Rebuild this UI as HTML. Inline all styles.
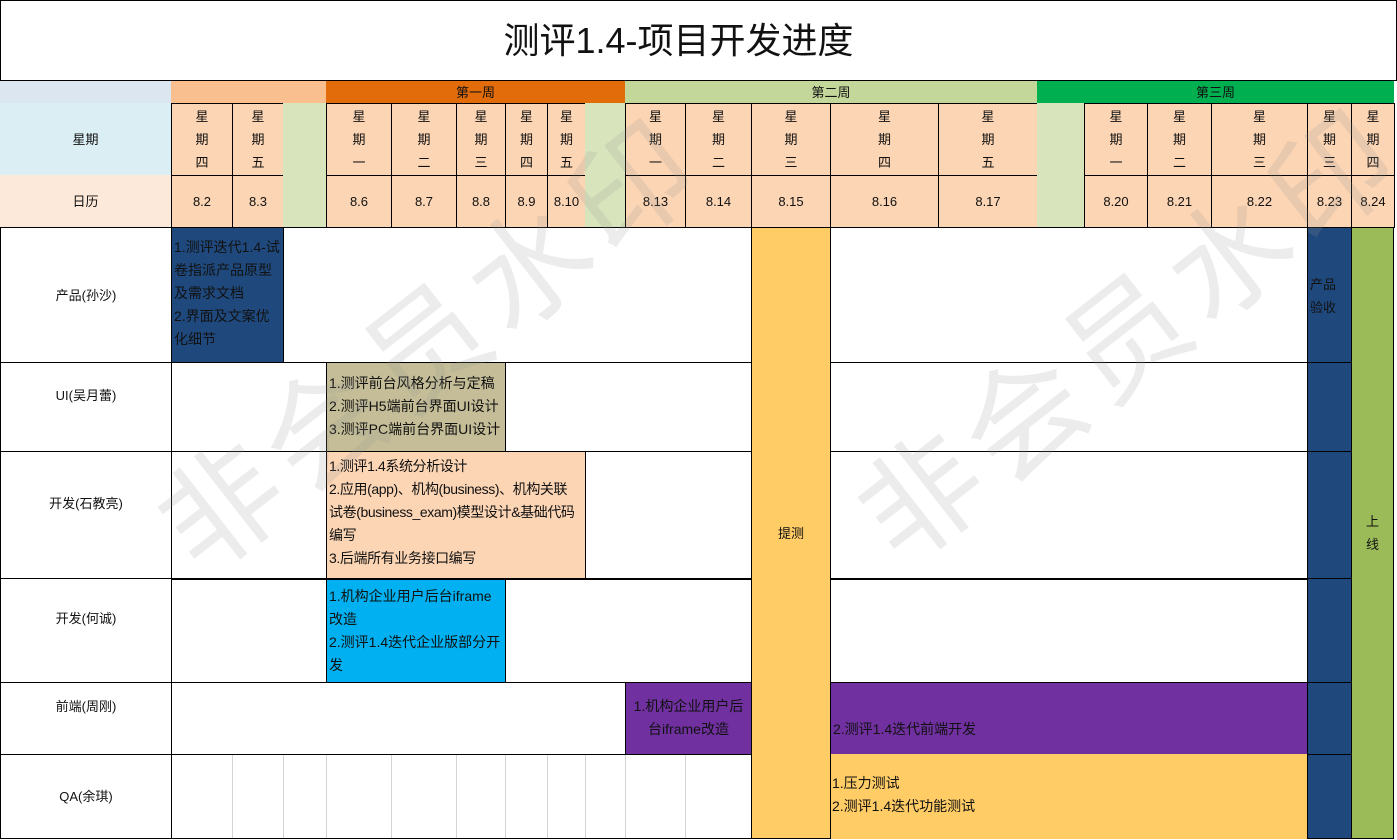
<!DOCTYPE html>
<html><head><meta charset="utf-8"><style>
body{margin:0;width:1397px;height:840px;overflow:hidden;background:#fff;font-family:"Liberation Sans","Noto Sans CJK SC",sans-serif;font-size:13px;color:#111;position:relative}
.c{position:absolute;box-sizing:border-box;border:1px solid #000;display:flex;align-items:center;justify-content:center;text-align:center;line-height:23px}
.n{border:none}
.t{position:absolute;box-sizing:border-box;padding:2px 2px;line-height:23px;text-align:left;border:1px solid #000;font-size:14px}
.g{position:absolute;top:754px;height:84px;border-left:1px solid #d4d4d4}
.wm{position:absolute;font-size:120px;color:rgba(150,150,150,0.18);transform:rotate(-38deg);white-space:nowrap;letter-spacing:10px;pointer-events:none}
</style></head><body>
<div class="c" style="left:0;top:0;width:1397px;height:81px;font-size:36px;padding-right:40px">测评1.4-项目开发进度</div>

<div class="c n" style="left:0;top:81px;width:171px;height:22px;background:#dce6f1"></div>
<div class="c n" style="left:171px;top:81px;width:155px;height:22px;background:#fabf8f"></div>
<div class="c n" style="left:326px;top:81px;width:299px;height:22px;background:#e26b0a">第一周</div>
<div class="c n" style="left:625px;top:81px;width:412px;height:22px;background:#c4d79b">第二周</div>
<div class="c n" style="left:1037px;top:81px;width:357px;height:22px;background:#00b050">第三周</div>

<div class="c n" style="left:0;top:103px;width:171px;height:73px;background:#daeef3">星期</div>
<div class="c n" style="left:0;top:175px;width:171px;height:52px;background:#fde9d9">日历</div>

<div id="cols"></div>
<script>
var cols=[[171,232,"四","8.2"],[232,283,"五","8.3"],[283,326,"",""],[326,391,"一","8.6"],[391,456,"二","8.7"],[456,505,"三","8.8"],[505,547,"四","8.9"],[547,585,"五","8.10"],[585,625,"",""],[625,685,"一","8.13"],[685,751,"二","8.14"],[751,830,"三","8.15"],[830,938,"四","8.16"],[938,1037,"五","8.17"],[1037,1084,"",""],[1084,1147,"一","8.20"],[1147,1211,"二","8.21"],[1211,1307,"三","8.22"],[1307,1351,"三","8.23"],[1351,1394,"四","8.24"]];
var h="";
cols.forEach(function(c){var w=c[1]-c[0]+1;var green=c[2]=="";var bg=green?"#d8e4bc":"#fcd5b4";
h+='<div class="c" style="left:'+c[0]+'px;top:103px;width:'+w+'px;height:73px;background:'+bg+(green?';border:none':'')+'">'+(green?'':'星<br>期<br>'+c[2])+'</div>';
h+='<div class="c" style="left:'+c[0]+'px;top:175px;width:'+w+'px;height:53px;background:'+bg+(green?';border:none':'')+'">'+c[3]+'</div>';
if(c[0]<751&&c[0]>171)h+='<div class="g" style="left:'+c[0]+'px"></div>';});
document.getElementById("cols").innerHTML=h;
</script>

<div class="c" style="left:0;top:227px;width:172px;height:136px">产品(孙沙)</div>
<div class="c" style="left:0;top:362px;width:172px;height:90px;padding-bottom:24px">UI(吴月蕾)</div>
<div class="c" style="left:0;top:451px;width:172px;height:128px;padding-bottom:24px">开发(石教亮)</div>
<div class="c" style="left:0;top:578px;width:172px;height:105px;padding-bottom:24px">开发(何诚)</div>
<div class="c" style="left:0;top:682px;width:172px;height:73px;padding-bottom:24px">前端(周刚)</div>
<div class="c" style="left:0;top:754px;width:172px;height:85px">QA(余琪)</div>

<div class="c" style="left:171px;top:227px;width:581px;height:136px"></div>
<div class="c" style="left:171px;top:362px;width:581px;height:90px"></div>
<div class="c" style="left:171px;top:451px;width:581px;height:128px"></div>
<div class="c" style="left:171px;top:578px;width:581px;height:105px;border-top:2px solid #000"></div>
<div class="c" style="left:171px;top:682px;width:581px;height:73px"></div>
<div class="c" style="left:830px;top:227px;width:478px;height:136px"></div>
<div class="c" style="left:830px;top:362px;width:478px;height:90px"></div>
<div class="c" style="left:830px;top:451px;width:478px;height:128px"></div>
<div class="c" style="left:830px;top:578px;width:478px;height:105px;border-top:2px solid #000"></div>
<div class="c" style="left:171px;top:754px;width:581px;height:85px;border-left:none;border-top:none"></div>

<div class="t" style="left:171px;top:227px;width:113px;height:136px;background:#1f497d;padding-top:8px">1.测评迭代1.4-试卷指派产品原型及需求文档<br>2.界面及文案优化细节</div>
<div class="t" style="left:326px;top:362px;width:180px;height:90px;background:#c4bd97;padding-top:9px">1.测评前台风格分析与定稿<br>2.测评H5端前台界面UI设计<br>3.测评PC端前台界面UI设计</div>
<div class="t" style="left:326px;top:451px;width:260px;height:128px;background:#fcd5b4;padding-top:3px;white-space:nowrap;letter-spacing:-0.4px;overflow:hidden">1.测评1.4系统分析设计<br>2.应用(app)、机构(business)、机构关联<br>试卷(business_exam)模型设计&amp;基础代码<br>编写<br>3.后端所有业务接口编写</div>
<div class="t" style="left:326px;top:578px;width:180px;height:105px;background:#00b0f0;padding-top:5px;border-top:2px solid #000">1.机构企业用户后台iframe改造<br>2.测评1.4迭代企业版部分开发</div>
<div class="t" style="left:625px;top:682px;width:127px;height:73px;background:#7030a0;padding-top:12px;text-align:center">1.机构企业用户后台iframe改造</div>
<div class="t" style="left:830px;top:682px;width:478px;height:73px;background:#7030a0;padding-top:35px">2.测评1.4迭代前端开发</div>
<div class="t" style="left:830px;top:754px;width:478px;height:85px;background:#ffcc66;padding-top:18px;border:none">1.压力测试<br>2.测评1.4迭代功能测试</div>

<div class="c" style="left:751px;top:227px;width:80px;height:612px;background:#ffcc66">提测</div>
<div class="c" style="left:1307px;top:227px;width:45px;height:136px;background:#1f497d;align-items:flex-start;padding-top:45px;justify-content:flex-start;padding-left:2px;text-align:left">产品<br>验收</div>
<div class="c" style="left:1307px;top:362px;width:45px;height:90px;background:#1f497d"></div>
<div class="c" style="left:1307px;top:451px;width:45px;height:128px;background:#1f497d"></div>
<div class="c" style="left:1307px;top:578px;width:45px;height:105px;background:#1f497d"></div>
<div class="c" style="left:1307px;top:682px;width:45px;height:73px;background:#1f497d"></div>
<div class="c" style="left:1307px;top:754px;width:45px;height:85px;background:#1f497d"></div>
<div class="c" style="left:1351px;top:227px;width:43px;height:612px;background:#9bbb59">上<br>线</div>

<div class="wm" style="left:100px;top:250px">非会员水印</div>
<div class="wm" style="left:800px;top:240px">非会员水印</div>
</body></html>
